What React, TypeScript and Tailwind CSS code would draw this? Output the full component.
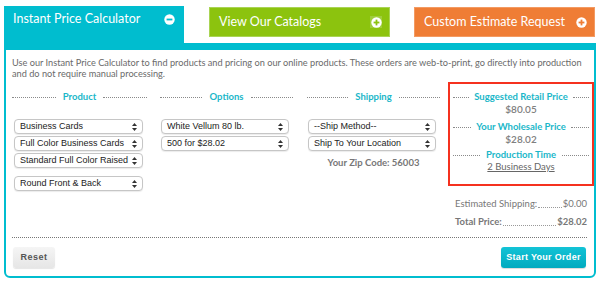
import React from "react";

const TEAL = "#00bdcf";

function CircleIcon({ kind, color }: { kind: "plus" | "minus"; color: string }) {
  return (
    <svg width="11" height="11" viewBox="0 0 11 11">
      <circle cx="5.5" cy="5.5" r="5.2" fill="white" />
      <rect x="2.6" y="4.6" width="5.8" height="1.8" fill={color} />
      {kind === "plus" && <rect x="4.6" y="2.6" width="1.8" height="5.8" fill={color} />}
    </svg>
  );
}

function Select({ label, className = "" }: { label: string; className?: string }) {
  return (
    <div
      className={`flex h-[15px] items-center justify-between rounded-[4px] border border-[#c6c6c6] bg-white pl-[5px] pr-[5px] shadow-[0_1px_1px_rgba(0,0,0,0.08)] ${className}`}
    >
      <span className="text-[9px] leading-none text-[#222]" style={{ fontFamily: '"Liberation Sans", Arial, sans-serif' }}>
        {label}
      </span>
      <svg width="5" height="8" viewBox="0 0 5 8">
        <polygon points="2.5,0 5,3 0,3" fill="#333" />
        <polygon points="0,5 5,5 2.5,8" fill="#333" />
      </svg>
    </div>
  );
}

function DotHeading({ text, gap = "gap-[7px]" }: { text: string; gap?: string }) {
  return (
    <div className={`flex h-[12px] items-center ${gap}`}>
      <div className="flex-1 border-t border-dotted border-[#8a8a8a]" />
      <span className="text-[9.5px] font-bold leading-[12px] text-[#1bb7c9]">{text}</span>
      <div className="flex-1 border-t border-dotted border-[#8a8a8a]" />
    </div>
  );
}

export default function App() {
  return (
    <div
      className="h-[284px] w-[600px] bg-white px-[4px] pt-[6px] text-[#666]"
      style={{ fontFamily: 'Lato, "Open Sans", sans-serif' }}
    >
      {/* Tabs */}
      <div className="flex h-[37px] items-start">
        <div className="flex h-[37px] w-[180px] items-start justify-between bg-[#00bdcf] pl-[9px] pr-[9px] pt-[5px]">
          <span className="text-[12.5px] leading-[16px] text-white">Instant Price Calculator</span>
          <span className="mt-[3px]"><CircleIcon kind="minus" color={TEAL} /></span>
        </div>
        <div className="ml-[25px] mt-[1px] flex h-[30px] w-[181px] items-center justify-between border border-[#a9d454] bg-[#8cc30e] pl-[9px] pr-[7px]">
          <span className="text-[12.5px] leading-[16px] text-white">View Our Catalogs</span>
          <span className="flex h-[12px] w-[12px] items-center justify-center bg-[#9fcd3c]"><CircleIcon kind="plus" color="#8cc30e" /></span>
        </div>
        <div className="ml-[24px] mt-[1px] flex h-[30px] w-[181px] items-center justify-between border border-[#f39a62] bg-[#ef7d35] pl-[9px] pr-[7px]">
          <span className="text-[12.5px] leading-[16px] text-white">Custom Estimate Request</span>
          <CircleIcon kind="plus" color="#ef7d35" />
        </div>
      </div>

      {/* Panel */}
      <div className="h-[235px] w-[592px] rounded-b-[6px] border-x-2 border-b-2 border-t-[7px] border-[#00bdcf] pl-[6px]">
        <p className="mr-[8px] pt-[7px] text-[9.2px] leading-[11px] text-[#6a6a6a]">
          Use our Instant Price Calculator to find products and pricing on our online products. These orders are web-to-print, go directly into production and do not require manual processing.
        </p>

        <div className="mt-[3px] flex items-start">
          {/* Product */}
          <div className="w-[135px] pt-[9px]">
            <DotHeading text="Product" />
            <div className="mt-[16px] flex flex-col gap-[2px] pl-[2px] pr-[4px]">
              <Select label="Business Cards" />
              <Select label="Full Color Business Cards" />
              <Select label="Standard Full Color Raised" />
              <Select label="Round Front & Back" className="mt-[6px]" />
            </div>
          </div>
          {/* Options */}
          <div className="ml-[13px] w-[133px] pt-[9px]">
            <DotHeading text="Options" />
            <div className="mt-[16px] flex flex-col gap-[2px] pl-[1px] pr-[4px]">
              <Select label="White Vellum 80 lb." />
              <Select label="500 for $28.02" />
            </div>
          </div>
          {/* Shipping */}
          <div className="ml-[14px] w-[133px] pt-[9px]">
            <DotHeading text="Shipping" />
            <div className="mt-[16px] flex flex-col gap-[2px] pl-[1px] pr-[4px]">
              <Select label="--Ship Method--" />
              <Select label="Ship To Your Location" />
            </div>
            <div className="mt-[6px] text-center text-[9.5px] font-bold leading-[12px] text-[#777]">
              Your Zip Code: 56003
            </div>
          </div>
          {/* Summary */}
          <div className="ml-[8px] h-[104px] w-[146px] border-2 border-[#f5311f] px-[3px] pt-[7px] text-center">
            <DotHeading text="Suggested Retail Price" gap="gap-[5px]" />
            <div className="text-[10px] font-semibold leading-[13px] text-[#808080]">$80.05</div>
            <div className="mt-[5px]"><DotHeading text="Your Wholesale Price" gap="gap-[5px]" /></div>
            <div className="text-[10px] font-semibold leading-[13px] text-[#808080]">$28.02</div>
            <div className="mt-[3px]"><DotHeading text="Production Time" gap="gap-[6px]" /></div>
            <div className="text-[9.5px] leading-[12px] text-[#666] underline">2 Business Days</div>
          </div>
        </div>

        {/* Totals */}
        <div className="mr-[7px] mt-[7px] flex justify-end">
          <div className="w-[132px] text-[9.5px] leading-[12px] text-[#777]">
            <div className="flex items-end">
              <span>Estimated Shipping:</span>
              <span className="mx-[1px] mb-[2px] flex-1 border-b border-dotted border-[#999]" />
              <span>$0.00</span>
            </div>
            <div className="mt-[6px] flex items-end font-bold">
              <span>Total Price:</span>
              <span className="mx-[1px] mb-[2px] flex-1 border-b border-dotted border-[#999]" />
              <span>$28.02</span>
            </div>
          </div>
        </div>

        <div className="mr-[7px] mt-[9px] border-t border-dotted border-[#777]" />

        <div className="mr-[8px] mt-[9px] flex items-center justify-between">
          <button className="ml-[1px] h-[21px] w-[42px] rounded-[3px] bg-gradient-to-b from-[#f5f5f5] to-[#e6e6e6] text-[9px] font-bold text-[#555] shadow-[0_1px_1px_rgba(0,0,0,0.1)]" style={{ fontFamily: '"Liberation Sans", Arial, sans-serif', letterSpacing: "0.5px" }}>
            Reset
          </button>
          <button className="h-[21px] w-[85px] rounded-[3px] bg-gradient-to-b from-[#12c3d6] to-[#01aabf] text-[9px] font-bold text-white shadow-[0_1px_1px_rgba(0,0,0,0.15)]" style={{ fontFamily: '"Liberation Sans", Arial, sans-serif', letterSpacing: "0.3px" }}>
            Start Your Order
          </button>
        </div>
      </div>
    </div>
  );
}
